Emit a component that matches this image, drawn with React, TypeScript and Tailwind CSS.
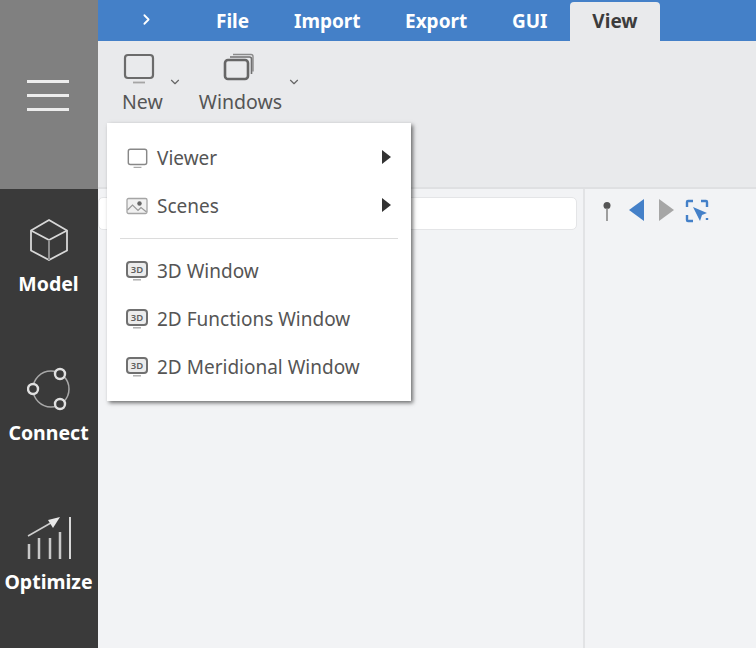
import type { ReactNode } from "react";
import { ChevronDown, ChevronRight } from "lucide-react";

const font = "font-['Noto_Sans','Open_Sans',sans-serif]";

function Monitor({ className, tone = "#6b6b6b" }: { className?: string; tone?: string }) {
  return (
    <svg viewBox="0 0 32 32" className={className} fill="none" stroke={tone}>
      <rect x="2" y="2" width="28" height="23" rx="3" strokeWidth="2.200" />
      <path d="M10 29.500h12" strokeWidth="1.800" stroke="#a5a5a5" />
    </svg>
  );
}

function Stack() {
  return (
    <svg viewBox="0 0 32 28" className="w-[32px] h-[28px]" fill="none">
      <path d="M10 1.500h18a2 2 0 0 1 2 2v15" strokeWidth="1.400" stroke="#8a8a8a" />
      <path d="M7 4h19.500a2 2 0 0 1 2 2v15" strokeWidth="1.600" stroke="#707070" />
      <rect x="2" y="7" width="23" height="19" rx="3" strokeWidth="2.600" stroke="#666" fill="#e9eaec" />
    </svg>
  );
}

function MenuIcon3D() {
  return (
    <svg viewBox="0 0 22 20" className="w-[22px] h-[20px]" fill="none">
      <rect x="1" y="1" width="20" height="15" rx="3" fill="#ececec" stroke="#707070" strokeWidth="2" />
      <path d="M7 18.800h8" stroke="#aaa" strokeWidth="1.400" />
      <text x="11" y="12" textAnchor="middle" fontSize="9.500" fontWeight="600" fill="#5f5f5f" fontFamily="Noto Sans">
        3D
      </text>
    </svg>
  );
}

function ScenesIcon() {
  return (
    <svg viewBox="0 0 22 18" className="w-[22px] h-[18px]" fill="none">
      <rect x="1" y="1.500" width="20" height="15" rx="1.500" fill="#f1f1f1" stroke="#a5a5a5" strokeWidth="1.300" />
      <circle cx="13.500" cy="6.500" r="2.200" fill="#666" />
      <path d="M1.500 13l5-5 5.500 5.500 3-3 5.500 4.500" stroke="#999" strokeWidth="1.200" />
    </svg>
  );
}

function SideItem({ label, icon }: { label: string; icon: ReactNode }) {
  return (
    <div className="h-[149px] shrink-0 flex flex-col items-center">
      <div className="h-[46px] flex items-center justify-center">{icon}</div>
      <div className="text-[19.500px] leading-[24px] mt-[9px] pr-[1px] font-bold text-white">{label}</div>
    </div>
  );
}

function MenuRow({ icon, label, arrow }: { icon: ReactNode; label: string; arrow?: boolean }) {
  return (
    <div className="h-[48px] flex items-center pl-[19px] pr-[20px]">
      <div className="w-[22px] flex justify-center">{icon}</div>
      <span className="ml-[9px] text-[19px] text-[#555]">{label}</span>
      {arrow && <span className="ml-auto mb-[2px] w-0 h-0 border-y-[7px] border-y-transparent border-l-[9px] border-l-[#333]" />}
    </div>
  );
}

export default function App() {
  return (
    <div className={`relative flex w-[756px] h-[648px] overflow-hidden bg-[#f2f3f5] ${font}`}>
      <div className="w-[98px] shrink-0 flex flex-col bg-[#3a3a3a]">
        <div className="h-[189px] shrink-0 bg-[#808080] flex flex-col items-center pt-[80px] pr-[2px] gap-[11px]">
          <div className="w-[42px] h-[3px] bg-[#ececec]" />
          <div className="w-[42px] h-[3px] bg-[#ececec]" />
          <div className="w-[42px] h-[3px] bg-[#ececec]" />
        </div>
        <div className="pt-[28px]">
          <SideItem
            label="Model"
            icon={
              <svg viewBox="0 0 40 44" className="w-[40px] h-[44px]" fill="none" stroke="#d8d8d8" strokeWidth="1.800">
                <path d="M20 2l18 10.500v20L20 42 2 32.500v-20z" />
                <path d="M2 12.500L20 22l18-9.500" />
                <path d="M20 22v20" stroke="#8f8f8f" strokeWidth="2" />
              </svg>
            }
          />
          <SideItem
            label="Connect"
            icon={
              <svg viewBox="0 0 44 44" className="w-[44px] h-[44px]" fill="none">
                <circle cx="24" cy="22" r="18" stroke="#a8a8a8" strokeWidth="1.500" />
                <circle cx="33" cy="7" r="5" fill="#3a3a3a" stroke="#e0e0e0" strokeWidth="2.400" />
                <circle cx="6" cy="22" r="5" fill="#3a3a3a" stroke="#e0e0e0" strokeWidth="2.400" />
                <circle cx="33" cy="37" r="5" fill="#3a3a3a" stroke="#e0e0e0" strokeWidth="2.400" />
              </svg>
            }
          />
          <SideItem
            label="Optimize"
            icon={
              <svg viewBox="0 0 46 44" className="w-[46px] h-[44px]" fill="none">
                <path d="M2 20L30 4" stroke="#cfcfcf" strokeWidth="1.500" />
                <path d="M34 1L22 4l5 8z" fill="#e8e8e8" />
                <path d="M3 28v15M13 22v21M24 22v21M34 16v27" stroke="#c8c8c8" strokeWidth="2.500" />
                <path d="M44 1v42" stroke="#d8d8d8" strokeWidth="2" />
              </svg>
            }
          />
        </div>
      </div>

      <div className="flex-1 flex flex-col min-w-0">
        <div className="h-[41px] shrink-0 bg-[#4480c8] flex items-end text-white font-bold text-[19px]">
          <div className="w-[96px] h-full flex items-center pl-[40px] pb-[3px]">
            <ChevronRight size={17} strokeWidth={2.500} />
          </div>
          <div className="h-full flex items-center w-[78px] pl-[22px] pt-[1px]">File</div>
          <div className="h-full flex items-center w-[111px] pl-[22px] pt-[1px]">Import</div>
          <div className="h-full flex items-center w-[108px] pl-[22px] pt-[1px]">Export</div>
          <div className="h-full flex items-center w-[79px] pl-[21px] pt-[1px]">GUI</div>
          <div className="h-[39px] w-[90px] bg-[#e9eaec] text-[#3c3c3c] rounded-t-[4px] flex items-center justify-center">
            View
          </div>
        </div>

        <div className="h-[148px] shrink-0 bg-[#e9eaec] border-b-2 border-[#dfe0e2] flex items-start text-[19.500px] text-[#555]">
          <div className="ml-[24px] mt-[12px] flex flex-col items-start">
            <Monitor className="w-[32px] h-[32px] ml-[1px]" />
            <div className="leading-[24px] mt-[5px]">New</div>
          </div>
          <ChevronDown size={14} className="mt-[34px] ml-[5px] text-[#666]" />
          <div className="ml-[17px] mt-[12px] flex flex-col items-start">
            <div className="h-[32px] ml-[24px] flex items-start">
              <Stack />
            </div>
            <div className="leading-[24px] mt-[5px]">Windows</div>
          </div>
          <ChevronDown size={14} className="mt-[34px] ml-[5px] text-[#666]" />
        </div>

        <div className="flex-1 flex min-h-0">
          <div className="w-[487px] shrink-0 border-r-2 border-[#e2e3e5] pt-[8px] pr-[6px]">
            <div className="h-[33px] bg-white border border-[#e4e5e7] rounded-[5px]" />
          </div>
          <div className="flex-1 flex items-start pt-[10px] pl-[16px]">
            <svg viewBox="0 0 12 22" className="w-[12px] h-[22px] mt-[1px]">
              <circle cx="6" cy="5.500" r="3.500" fill="#555" />
              <path d="M6 8v13" stroke="#888" strokeWidth="1.600" />
            </svg>
            <span className="w-0 h-0 ml-[16px] border-y-[11px] border-y-transparent border-r-[15px] border-r-[#4480c8]" />
            <span className="w-0 h-0 ml-[15px] border-y-[11px] border-y-transparent border-l-[15px] border-l-[#a6a6a6]" />
            <svg viewBox="0 0 24 24" className="w-[24px] h-[24px] ml-[11px]" fill="none">
              <path d="M2 8V3a1 1 0 0 1 1-1h5M16 2h5a1 1 0 0 1 1 1v5M2 16v5a1 1 0 0 0 1 1h5M22 19v2" stroke="#4480c8" strokeWidth="2.400" />
              <path d="M8 8l14 6-5 2-2 6z" fill="#4480c8" />
            </svg>
          </div>
        </div>
      </div>

      <div className="absolute left-[107px] top-[123px] w-[304px] h-[278px] bg-white shadow-[2px_2px_4px_rgba(0,0,0,0.55)] pt-[11px]">
        <MenuRow arrow label="Viewer" icon={<Monitor className="w-[21px] h-[21px]" tone="#888" />} />
        <MenuRow arrow label="Scenes" icon={<ScenesIcon />} />
        <div className="mx-[13px] mt-[8px] mb-[8px] h-px bg-[#dcdcdc]" />
        <MenuRow label="3D Window" icon={<MenuIcon3D />} />
        <MenuRow label="2D Functions Window" icon={<MenuIcon3D />} />
        <MenuRow label="2D Meridional Window" icon={<MenuIcon3D />} />
      </div>
    </div>
  );
}
